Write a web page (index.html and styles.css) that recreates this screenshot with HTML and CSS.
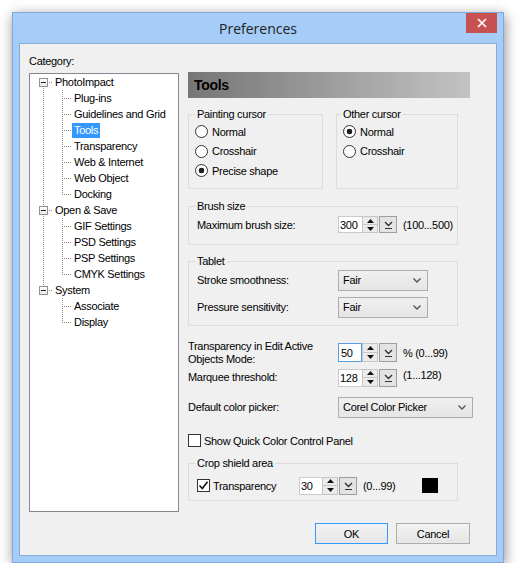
FILE: index.html
```html
<!DOCTYPE html>
<html>
<head>
<meta charset="utf-8">
<title>Preferences</title>
<link rel="stylesheet" href="styles.css">
</head>
<body>
<div class="window">
  <div class="titlebar">
    <span></span>
    <span class="title">Preferences</span>
    <button class="close" aria-label="Close"><svg width="10" height="10" viewBox="0 0 10 10"><path d="M1 1L9 9M9 1L1 9" stroke="#fff" stroke-width="1.7" fill="none"/></svg></button>
  </div>
  <div class="client">
    <div class="main">
      <div class="left">
        <div class="cat-label">Category:</div>
        <div class="tree">
          <div class="trow"><span class="g root-first"><span class="box"></span></span><span class="tl">PhotoImpact</span></div>
          <div class="trow"><span class="g v"></span><span class="g tee"></span><span class="tl">Plug-ins</span></div>
          <div class="trow"><span class="g v"></span><span class="g tee"></span><span class="tl">Guidelines and Grid</span></div>
          <div class="trow"><span class="g v"></span><span class="g tee"></span><span class="tl sel">Tools</span></div>
          <div class="trow"><span class="g v"></span><span class="g tee"></span><span class="tl">Transparency</span></div>
          <div class="trow"><span class="g v"></span><span class="g tee"></span><span class="tl">Web &amp; Internet</span></div>
          <div class="trow"><span class="g v"></span><span class="g tee"></span><span class="tl">Web Object</span></div>
          <div class="trow"><span class="g v"></span><span class="g ell"></span><span class="tl">Docking</span></div>
          <div class="trow"><span class="g root-mid"><span class="box"></span></span><span class="tl">Open &amp; Save</span></div>
          <div class="trow"><span class="g v"></span><span class="g tee"></span><span class="tl">GIF Settings</span></div>
          <div class="trow"><span class="g v"></span><span class="g tee"></span><span class="tl">PSD Settings</span></div>
          <div class="trow"><span class="g v"></span><span class="g tee"></span><span class="tl">PSP Settings</span></div>
          <div class="trow"><span class="g v"></span><span class="g ell"></span><span class="tl">CMYK Settings</span></div>
          <div class="trow"><span class="g root-last"><span class="box"></span></span><span class="tl">System</span></div>
          <div class="trow"><span class="g"></span><span class="g tee"></span><span class="tl">Associate</span></div>
          <div class="trow"><span class="g"></span><span class="g ell"></span><span class="tl">Display</span></div>
        </div>
      </div>
      <div class="right">
        <div class="panel-head">Tools</div>
        <div class="cursor-groups">
          <fieldset class="grp grp-paint">
            <legend>Painting cursor</legend>
            <label class="radio"><span class="rb"></span>Normal</label>
            <label class="radio"><span class="rb"></span>Crosshair</label>
            <label class="radio"><span class="rb on"></span>Precise shape</label>
          </fieldset>
          <fieldset class="grp grp-other">
            <legend>Other cursor</legend>
            <label class="radio"><span class="rb on"></span>Normal</label>
            <label class="radio"><span class="rb"></span>Crosshair</label>
          </fieldset>
        </div>
        <fieldset class="grp grp-wide grp-brush">
          <legend>Brush size</legend>
          <div class="frow">
            <span class="flabel">Maximum brush size:</span>
            <div class="spin">
              <span class="spin-edit">300</span>
              <span class="spin-btns"><span class="sb"><svg width="7" height="4" viewBox="0 0 7 4"><path d="M0 4L3.5 0L7 4Z"/></svg></span><span class="sb"><svg width="7" height="4" viewBox="0 0 7 4"><path d="M0 0L3.5 4L7 0Z"/></svg></span></span>
              <span class="spin-dd"><svg width="9" height="8" viewBox="0 0 9 8"><path d="M1 1L4.5 4.5L8 1" stroke="#333" stroke-width="1.4" fill="none"/><path d="M1 7.5H8" stroke="#333" stroke-width="1"/></svg></span>
            </div>
            <span class="hint">(100...500)</span>
          </div>
        </fieldset>
        <fieldset class="grp grp-wide grp-tablet">
          <legend>Tablet</legend>
          <div class="frow combo-row">
            <span class="flabel">Stroke smoothness:</span>
            <div class="combo"><span>Fair</span><svg width="8" height="5" viewBox="0 0 8 5"><path d="M0.5 0.5L4 4L7.5 0.5" stroke="#555" stroke-width="1.4" fill="none"/></svg></div>
          </div>
          <div class="frow combo-row">
            <span class="flabel">Pressure sensitivity:</span>
            <div class="combo"><span>Fair</span><svg width="8" height="5" viewBox="0 0 8 5"><path d="M0.5 0.5L4 4L7.5 0.5" stroke="#555" stroke-width="1.4" fill="none"/></svg></div>
          </div>
        </fieldset>
        <div class="orow orow-trans">
          <span class="olabel">Transparency in Edit Active<br>Objects Mode:</span>
          <div class="spin spin-19">
            <span class="spin-edit focus">50</span>
            <span class="spin-btns"><span class="sb"><svg width="7" height="4" viewBox="0 0 7 4"><path d="M0 4L3.5 0L7 4Z"/></svg></span><span class="sb"><svg width="7" height="4" viewBox="0 0 7 4"><path d="M0 0L3.5 4L7 0Z"/></svg></span></span>
            <span class="spin-dd"><svg width="9" height="8" viewBox="0 0 9 8"><path d="M1 1L4.5 4.5L8 1" stroke="#333" stroke-width="1.4" fill="none"/><path d="M1 7.5H8" stroke="#333" stroke-width="1"/></svg></span>
          </div>
          <span class="hint">% (0...99)</span>
        </div>
        <div class="orow orow-marquee">
          <span class="olabel">Marquee threshold:</span>
          <div class="spin spin-18">
            <span class="spin-edit">128</span>
            <span class="spin-btns"><span class="sb"><svg width="7" height="4" viewBox="0 0 7 4"><path d="M0 4L3.5 0L7 4Z"/></svg></span><span class="sb"><svg width="7" height="4" viewBox="0 0 7 4"><path d="M0 0L3.5 4L7 0Z"/></svg></span></span>
            <span class="spin-dd"><svg width="9" height="8" viewBox="0 0 9 8"><path d="M1 1L4.5 4.5L8 1" stroke="#333" stroke-width="1.4" fill="none"/><path d="M1 7.5H8" stroke="#333" stroke-width="1"/></svg></span>
          </div>
          <span class="hint hint-up">(1...128)</span>
        </div>
        <div class="orow orow-picker">
          <span class="olabel">Default color picker:</span>
          <div class="combo combo-wide"><span>Corel Color Picker</span><svg width="8" height="5" viewBox="0 0 8 5"><path d="M0.5 0.5L4 4L7.5 0.5" stroke="#555" stroke-width="1.4" fill="none"/></svg></div>
        </div>
        <label class="check-row"><span class="cb"></span>Show Quick Color Control Panel</label>
        <fieldset class="grp grp-wide grp-crop">
          <legend>Crop shield area</legend>
          <div class="frow">
            <label class="crop-check"><span class="cb"><svg width="11" height="11" viewBox="0 0 11 11"><path d="M1.5 5.5L4.3 8.5L9.5 1.8" stroke="#111" stroke-width="1.6" fill="none"/></svg></span>Transparency</label>
            <div class="spin spin-18 spin-narrow">
              <span class="spin-edit">30</span>
              <span class="spin-btns"><span class="sb"><svg width="7" height="4" viewBox="0 0 7 4"><path d="M0 4L3.5 0L7 4Z"/></svg></span><span class="sb"><svg width="7" height="4" viewBox="0 0 7 4"><path d="M0 0L3.5 4L7 0Z"/></svg></span></span>
              <span class="spin-dd"><svg width="9" height="8" viewBox="0 0 9 8"><path d="M1 1L4.5 4.5L8 1" stroke="#333" stroke-width="1.4" fill="none"/><path d="M1 7.5H8" stroke="#333" stroke-width="1"/></svg></span>
            </div>
            <span class="hint hint-fixed">(0...99)</span>
            <span class="swatch"></span>
          </div>
        </fieldset>
      </div>
    </div>
    <div class="footer">
      <button class="btn btn-default">OK</button>
      <button class="btn">Cancel</button>
    </div>
  </div>
</div>
</body>
</html>
```

FILE: styles.css
```css
:root {
  --vd: repeating-linear-gradient(to bottom, #8c8c8c 0 1px, transparent 1px 2px);
  --hd: repeating-linear-gradient(to right, #8c8c8c 0 1px, transparent 1px 2px);
}

body {
  margin: 0;
  background: #fff;
  font-family: "Liberation Sans", Arial, sans-serif;
  font-size: 11px;
  letter-spacing: -0.3px;
  color: #000;
}

.window {
  box-sizing: border-box;
  width: 492px;
  height: 551px;
  margin: 12px 0 0 12px;
  border: 1px solid #7fa9dc;
  background: #a5cdf7;
  box-shadow: 1px 3px 12px rgba(0, 0, 0, 0.45);
  display: flex;
  flex-direction: column;
}

.titlebar {
  height: 30px;
  flex: none;
  display: grid;
  grid-template-columns: 1fr auto 1fr;
  align-items: center;
}

.title {
  font-family: "Open Sans", "Noto Sans", sans-serif;
  font-size: 14px;
  letter-spacing: 0;
  color: #222;
}

.close {
  justify-self: end;
  align-self: start;
  width: 31px;
  height: 20px;
  margin-right: 6px;
  padding: 0;
  border: 0;
  background: #c75050;
  display: flex;
  align-items: center;
  justify-content: center;
}

.client {
  box-sizing: border-box;
  height: 513px;
  margin: 0 6px;
  border: 1px solid #86acd8;
  background: #f0f0f0;
  display: flex;
  flex-direction: column;
}

.main {
  display: flex;
  gap: 9px;
  padding: 10px 0 0 9px;
}

.left {
  width: 150px;
  flex: none;
}

.cat-label {
  line-height: 14px;
  margin-bottom: 5px;
}

.tree {
  box-sizing: border-box;
  height: 439px;
  border: 1px solid #828790;
  background: #fff;
  padding-left: 4px;
}

.trow {
  display: flex;
  align-items: center;
  height: 16px;
}

.g {
  width: 19px;
  height: 16px;
  flex: none;
  display: flex;
  align-items: center;
  background-repeat: no-repeat;
}

.g.v {
  background-image: var(--vd);
  background-size: 1px 16px;
  background-position: 9px 0;
}

.g.tee {
  background-image: var(--vd), var(--hd);
  background-size: 1px 16px, 8px 1px;
  background-position: 9px 0, 11px 8px;
}

.g.ell {
  background-image: var(--vd), var(--hd);
  background-size: 1px 9px, 8px 1px;
  background-position: 9px 0, 11px 8px;
}

.g.root-first {
  background-image: var(--vd), var(--hd);
  background-size: 1px 8px, 4px 1px;
  background-position: 9px 8px, 15px 8px;
}

.g.root-mid {
  background-image: var(--vd), var(--hd);
  background-size: 1px 16px, 4px 1px;
  background-position: 9px 0, 15px 8px;
}

.g.root-last {
  background-image: var(--vd), var(--hd);
  background-size: 1px 8px, 4px 1px;
  background-position: 9px 0, 15px 8px;
}

.box {
  box-sizing: border-box;
  width: 9px;
  height: 9px;
  margin-left: 5px;
  border: 1px solid #919191;
  background: linear-gradient(#222, #222) center / 5px 1px no-repeat, linear-gradient(#fff, #e8e8e8);
}

.tl {
  line-height: 15px;
  padding: 0 2px;
  white-space: nowrap;
}

.tl.sel {
  background: #3399ff;
  color: #fff;
}

.right {
  flex: 1;
  margin-top: 18px;
}

.panel-head {
  box-sizing: border-box;
  width: 282px;
  height: 26px;
  padding-left: 6px;
  display: flex;
  align-items: center;
  background: linear-gradient(to right, #767676, #c3c3c3);
  font-weight: bold;
  font-size: 14px;
}

.cursor-groups {
  display: flex;
  gap: 13px;
  margin-top: 10px;
}

.grp {
  box-sizing: border-box;
  margin: 0;
  min-width: 0;
  border: 1px solid #dcdcdc;
}

.grp legend {
  padding: 0 2px;
  line-height: 13px;
}

.grp-paint {
  width: 135px;
  padding: 1px 0 7px 6px;
}

.grp-other {
  width: 122px;
  padding: 1px 0 7px 6px;
}

.grp-other legend {
  margin-left: -2px;
}

.radio {
  display: flex;
  align-items: center;
  gap: 4px;
  height: 19.5px;
}

.rb {
  box-sizing: border-box;
  width: 13px;
  height: 13px;
  flex: none;
  border: 1px solid #333;
  border-radius: 50%;
  background: #fff;
}

.rb.on {
  background: radial-gradient(circle, #1e1e1e 0 2.6px, #fff 3.1px);
}

.grp-wide {
  width: 270px;
}

.grp-wide legend {
  margin-left: -2px;
}

.grp-brush {
  margin-top: 11px;
  padding: 2px 0 9px 8px;
}

.grp-tablet {
  margin-top: 10px;
  padding: 2px 0 7px 8px;
}

.grp-crop {
  margin-top: 9px;
  padding: 6px 0 4px 8px;
}

.frow {
  display: flex;
  align-items: center;
  height: 20px;
}

.frow.combo-row {
  height: 21px;
}

.frow.combo-row + .frow.combo-row {
  margin-top: 6px;
}

.flabel {
  width: 141px;
  flex: none;
}

.hint {
  margin-left: 6px;
  white-space: nowrap;
}

.hint-up {
  align-self: flex-start;
  line-height: 14px;
}

.hint-fixed {
  width: 59px;
  flex: none;
}

.spin {
  display: flex;
  height: 17px;
  flex: none;
}

.spin-19 {
  height: 19px;
}

.spin-18 {
  height: 18px;
}

.spin-edit {
  box-sizing: border-box;
  width: 24px;
  display: flex;
  align-items: center;
  padding-left: 1px;
  background: #fff;
  border: 1px solid #c9cbd0;
  border-right: 0;
}

.spin-narrow .spin-edit {
  width: 23px;
}

.spin-edit.focus {
  border: 1px solid #569de5;
  padding-left: 2px;
}

.spin-btns {
  box-sizing: border-box;
  width: 16px;
  display: flex;
  flex-direction: column;
  border: 1px solid #c6c6c6;
  background: #fff;
}

.sb {
  flex: 1;
  display: flex;
  align-items: center;
  justify-content: center;
  background: #ebebeb;
}

.sb + .sb {
  border-top: 1px solid #c6c6c6;
}

.sb svg {
  fill: #111;
}

.spin-dd {
  box-sizing: border-box;
  width: 18px;
  margin-left: 1px;
  display: flex;
  align-items: center;
  justify-content: center;
  border: 1px solid #9e9e9e;
  background: #e3e3e3;
}

.combo {
  box-sizing: border-box;
  width: 90px;
  height: 21px;
  flex: none;
  display: flex;
  align-items: center;
  justify-content: space-between;
  padding: 0 6px 0 4px;
  border: 1px solid #acacac;
  background: linear-gradient(#f0f0f0, #e5e5e5);
}

.combo-wide {
  width: 135px;
}

.orow {
  display: flex;
  align-items: center;
}

.olabel {
  width: 150px;
  flex: none;
  line-height: 13px;
}

.orow-trans {
  margin-top: 14px;
}

.orow-marquee {
  margin-top: 2px;
  height: 20px;
}

.orow-picker {
  margin-top: 9px;
  height: 21px;
}

.check-row {
  display: flex;
  align-items: center;
  gap: 3px;
  height: 14px;
  margin-top: 16px;
}

.cb {
  box-sizing: border-box;
  width: 13px;
  height: 13px;
  flex: none;
  border: 1px solid #333;
  background: #fff;
  display: flex;
  align-items: center;
  justify-content: center;
}

.crop-check {
  width: 102px;
  flex: none;
  display: flex;
  align-items: center;
  gap: 3px;
}

.swatch {
  width: 16px;
  height: 15px;
  flex: none;
  background: #000;
}

.footer {
  display: flex;
  justify-content: flex-end;
  gap: 8px;
  padding-right: 26px;
  margin-top: 11px;
}

.btn {
  width: 74px;
  height: 21px;
  padding: 0;
  font: inherit;
  letter-spacing: inherit;
  color: #000;
  border: 1px solid #adadad;
  background: linear-gradient(#f2f2f2, #e6e6e6);
}

.btn-default {
  width: 73px;
  border-color: #3399ff;
}
```
